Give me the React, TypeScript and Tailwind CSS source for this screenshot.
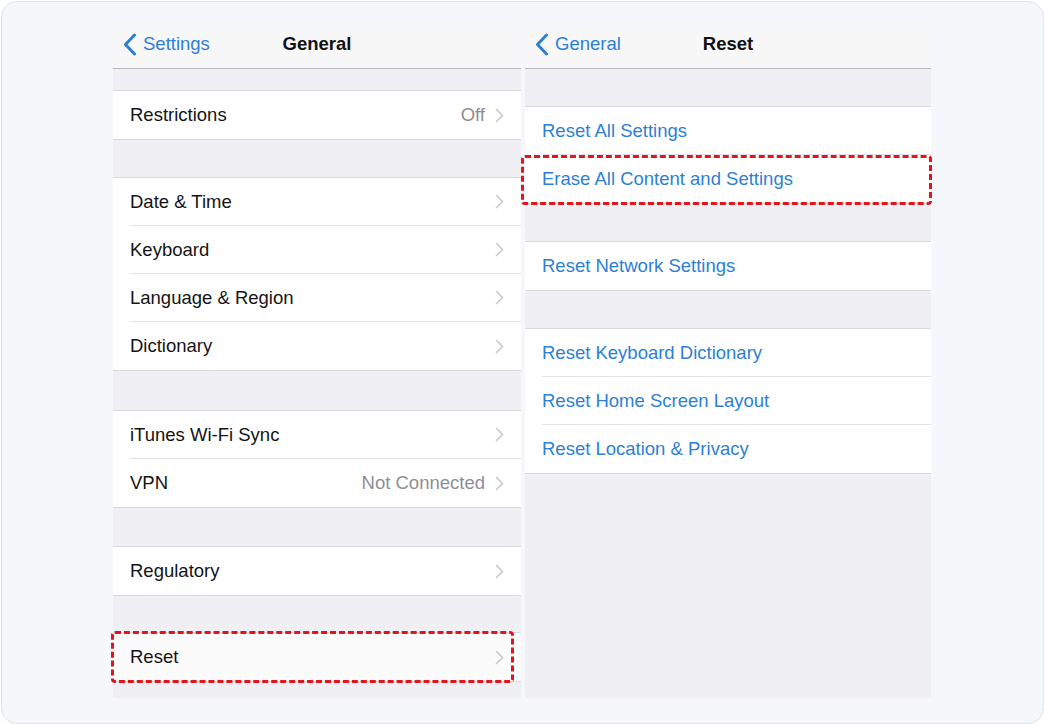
import React from "react";

type Row = { label: string; value?: string; chevron?: boolean; blue?: boolean; mark?: string; selected?: boolean };
type Block = { gap: string; rows: Row[] };

const generalBlocks: Block[] = [
  { gap: "h-[21px]", rows: [{ label: "Restrictions", value: "Off", chevron: true }] },
  {
    gap: "h-[37px]",
    rows: [
      { label: "Date & Time", chevron: true },
      { label: "Keyboard", chevron: true },
      { label: "Language & Region", chevron: true },
      { label: "Dictionary", chevron: true },
    ],
  },
  {
    gap: "h-[39px]",
    rows: [
      { label: "iTunes Wi-Fi Sync", chevron: true },
      { label: "VPN", value: "Not Connected", chevron: true },
    ],
  },
  { gap: "h-[38px]", rows: [{ label: "Regulatory", chevron: true }] },
  {
    gap: "h-[36px]",
    rows: [{ label: "Reset", chevron: true, selected: true, mark: "-top-[2px] -bottom-[2px] -left-[2px] right-[7px]" }],
  },
];

const resetBlocks: Block[] = [
  {
    gap: "h-[37px]",
    rows: [
      { label: "Reset All Settings", blue: true },
      { label: "Erase All Content and Settings", blue: true, mark: "top-0 -bottom-[2px] -left-[4px] -right-[1px]" },
    ],
  },
  { gap: "h-[37px]", rows: [{ label: "Reset Network Settings", blue: true }] },
  {
    gap: "h-[37px]",
    rows: [
      { label: "Reset Keyboard Dictionary", blue: true },
      { label: "Reset Home Screen Layout", blue: true },
      { label: "Reset Location & Privacy", blue: true },
    ],
  },
];

function Chevron() {
  return (
    <svg width="9" height="15" viewBox="0 0 9 15" className="ml-[10px] shrink-0">
      <path d="M1.5 1.5 L7.5 7.5 L1.5 13.5" fill="none" stroke="#c9c9ce" strokeWidth="1.7" strokeLinecap="round" strokeLinejoin="round" />
    </svg>
  );
}

function BackChevron() {
  return (
    <svg width="14" height="23" viewBox="0 0 14 23" className="shrink-0">
      <path d="M11.5 2 L2.5 11.5 L11.5 21" fill="none" stroke="#2d7fd6" strokeWidth="3" strokeLinecap="round" strokeLinejoin="round" />
    </svg>
  );
}

function NavBar({ back, title }: { back: string; title: string }) {
  return (
    <div className="relative h-[42px] shrink-0 bg-[#f7f7f8] border-b border-[#b9b9bd] flex items-center pl-[10px] pb-[7px]">
      <BackChevron />
      <span className="ml-[6px] text-[18.5px] text-[#2d7fd6]">{back}</span>
      <span className="absolute left-1/2 -translate-x-1/2 text-[18.5px] font-bold text-[#111]">{title}</span>
    </div>
  );
}

function SettingsRow({ row, last }: { row: Row; last: boolean }) {
  return (
    <div className={`relative h-[48px] pl-[17px] ${row.selected ? "bg-[#fbfbfb]" : "bg-white"}`}>
      <div className={`h-full flex items-center pr-[17px] ${last ? "" : "border-b border-[#e3e3e6]"}`}>
        <span className={`flex-1 text-[18.5px] ${row.blue ? "text-[#2d7fd6]" : "text-[#141414]"}`}>{row.label}</span>
        {row.value && <span className="text-[18.5px] text-[#8e8e93]">{row.value}</span>}
        {row.chevron && <Chevron />}
      </div>
      {row.mark && (
        <div className={`absolute ${row.mark} border-[3px] border-dashed border-[#e3141b] rounded-[4px]`} />
      )}
    </div>
  );
}

function Screen({ back, title, blocks, width }: { back: string; title: string; blocks: Block[]; width: string }) {
  return (
    <div className={`${width} h-[671px] flex flex-col bg-[#efeff4]`}>
      <NavBar back={back} title={title} />
      {blocks.map((b, i) => (
        <div key={i}>
          <div className={b.gap} />
          <div className="border-y border-[#d9d9dd]">
            {b.rows.map((r, j) => (
              <SettingsRow key={r.label} row={r} last={j === b.rows.length - 1} />
            ))}
          </div>
        </div>
      ))}
    </div>
  );
}

export default function App() {
  return (
    <div className="w-[1044px] h-[724px] bg-white" style={{ fontFamily: '"Liberation Sans", Arial, sans-serif' }}>
      <div className="w-[1043px] h-[723px] ml-[1px] mt-[1px] rounded-[16px] border border-[#dde3ec] bg-[#f5f7fa] pt-[25px] pl-[111px] flex gap-[4px]">
        <Screen back="Settings" title="General" blocks={generalBlocks} width="w-[408px]" />
        <Screen back="General" title="Reset" blocks={resetBlocks} width="w-[406px]" />
      </div>
    </div>
  );
}
